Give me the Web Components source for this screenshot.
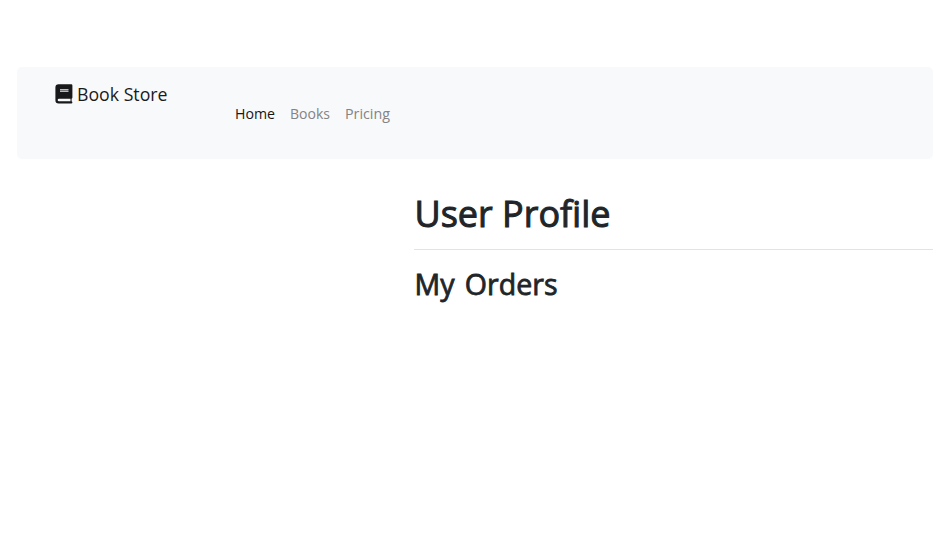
<!DOCTYPE html>
<html lang="en">
<head>
<meta charset="utf-8">
<title>Book Store</title>
<style>
html,body{margin:0;height:100%;overflow:hidden}
body{background:#fff;color:#212529;font-family:"Segoe UI","Open Sans","Noto Sans",sans-serif}
</style>
</head>
<body>
<store-page>
  <store-navbar slot="nav">
    <store-brand slot="brand">Book Store</store-brand>
    <nav-link active width="40">Home</nav-link>
    <nav-link width="40">Books</nav-link>
    <nav-link width="45">Pricing</nav-link>
  </store-navbar>
  <user-profile></user-profile>
</store-page>
<script>
const define = (name, html, ready) => customElements.define(name, class extends HTMLElement {
  connectedCallback() {
    if (this.shadowRoot) return;
    this.attachShadow({mode: 'open'}).innerHTML = html;
    if (ready) ready(this);
  }
});
const text = `svg.t{display:block;overflow:visible}svg.t text{fill:currentColor}`;

define('store-page', `<style>:host{display:flex;flex-direction:column;box-sizing:border-box;height:556px;padding:67px 0 0 17px}</style><slot name="nav"></slot><slot></slot>`);

define('store-navbar', `<style>
:host{display:flex;box-sizing:border-box;height:92px;padding:0 38px;background:#f8f9fb;border-radius:5px}
.brand{width:180px;padding-top:16px;box-sizing:border-box}
nav{display:flex;gap:15px;padding-top:36px}
</style><div class="brand"><slot name="brand"></slot></div><nav><slot></slot></nav>`);

define('store-brand', `<style>:host{display:flex;gap:4px;color:#191a1a}${text}.icon{width:18px;height:22px}</style>
<svg class="icon" viewBox="0 0 18 22"><path fill="#18191a" fill-rule="evenodd" d="M3.600 1.200H16.200Q17.400 1.200 17.400 2.400V14.500Q17.400 15.300 16.600 15.700V18.300Q17.400 18.500 17.400 19.400Q17.400 20.500 16.200 20.500H3.600Q.4 20.500.4 17.300V4.400Q.4 1.200 3.600 1.200ZM4 15.700Q2.700 15.700 2.700 17T4 18.300H15.500V15.700Z"/><path fill="#bbb" d="M5 6h8.500v1H5zM5 8h8.500v1H5z"/><path fill="#777" d="M5 7h8.500v1H5z"/></svg>
<svg class="t" width="91" height="24"><text y="18" font-size="18" textLength="90.500" lengthAdjust="spacingAndGlyphs"></text></svg>`,
 el => el.shadowRoot.querySelector('text').textContent = el.textContent.trim());

define('nav-link', `<style>:host{display:block;color:#838484}:host([active]){color:#161717}${text}</style>
<svg class="t" height="22"><text y="16" font-size="14.600" lengthAdjust="spacingAndGlyphs"></text></svg>`, el => {
  const t = el.shadowRoot.querySelector('text'), w = el.getAttribute('width');
  t.textContent = el.textContent.trim();
  t.setAttribute('textLength', w);
  t.parentNode.setAttribute('width', w);
});

define('user-profile', `<style>
:host{display:flex;flex-direction:column;margin-left:397px;padding-top:29px}
h1,h2{margin:0;height:48px}
hr{width:100%;border:0;border-top:1px solid #e2e3e3;margin:13px 0 14px}
${text}
svg.t text{stroke:currentColor;stroke-width:1px}
h2 svg.t text{stroke-width:.8px;word-spacing:3px}
</style>
<h1><svg class="t" width="198" height="48"><text x=".5" y="39" font-size="36.500" font-weight="400" textLength="196" lengthAdjust="spacingAndGlyphs">User Profile</text></svg></h1>
<hr>
<h2><svg class="t" width="145" height="38"><text x=".5" y="31" font-size="29" font-weight="400" textLength="143" lengthAdjust="spacingAndGlyphs">My Orders</text></svg></h2>`);
</script>
</body>
</html>
